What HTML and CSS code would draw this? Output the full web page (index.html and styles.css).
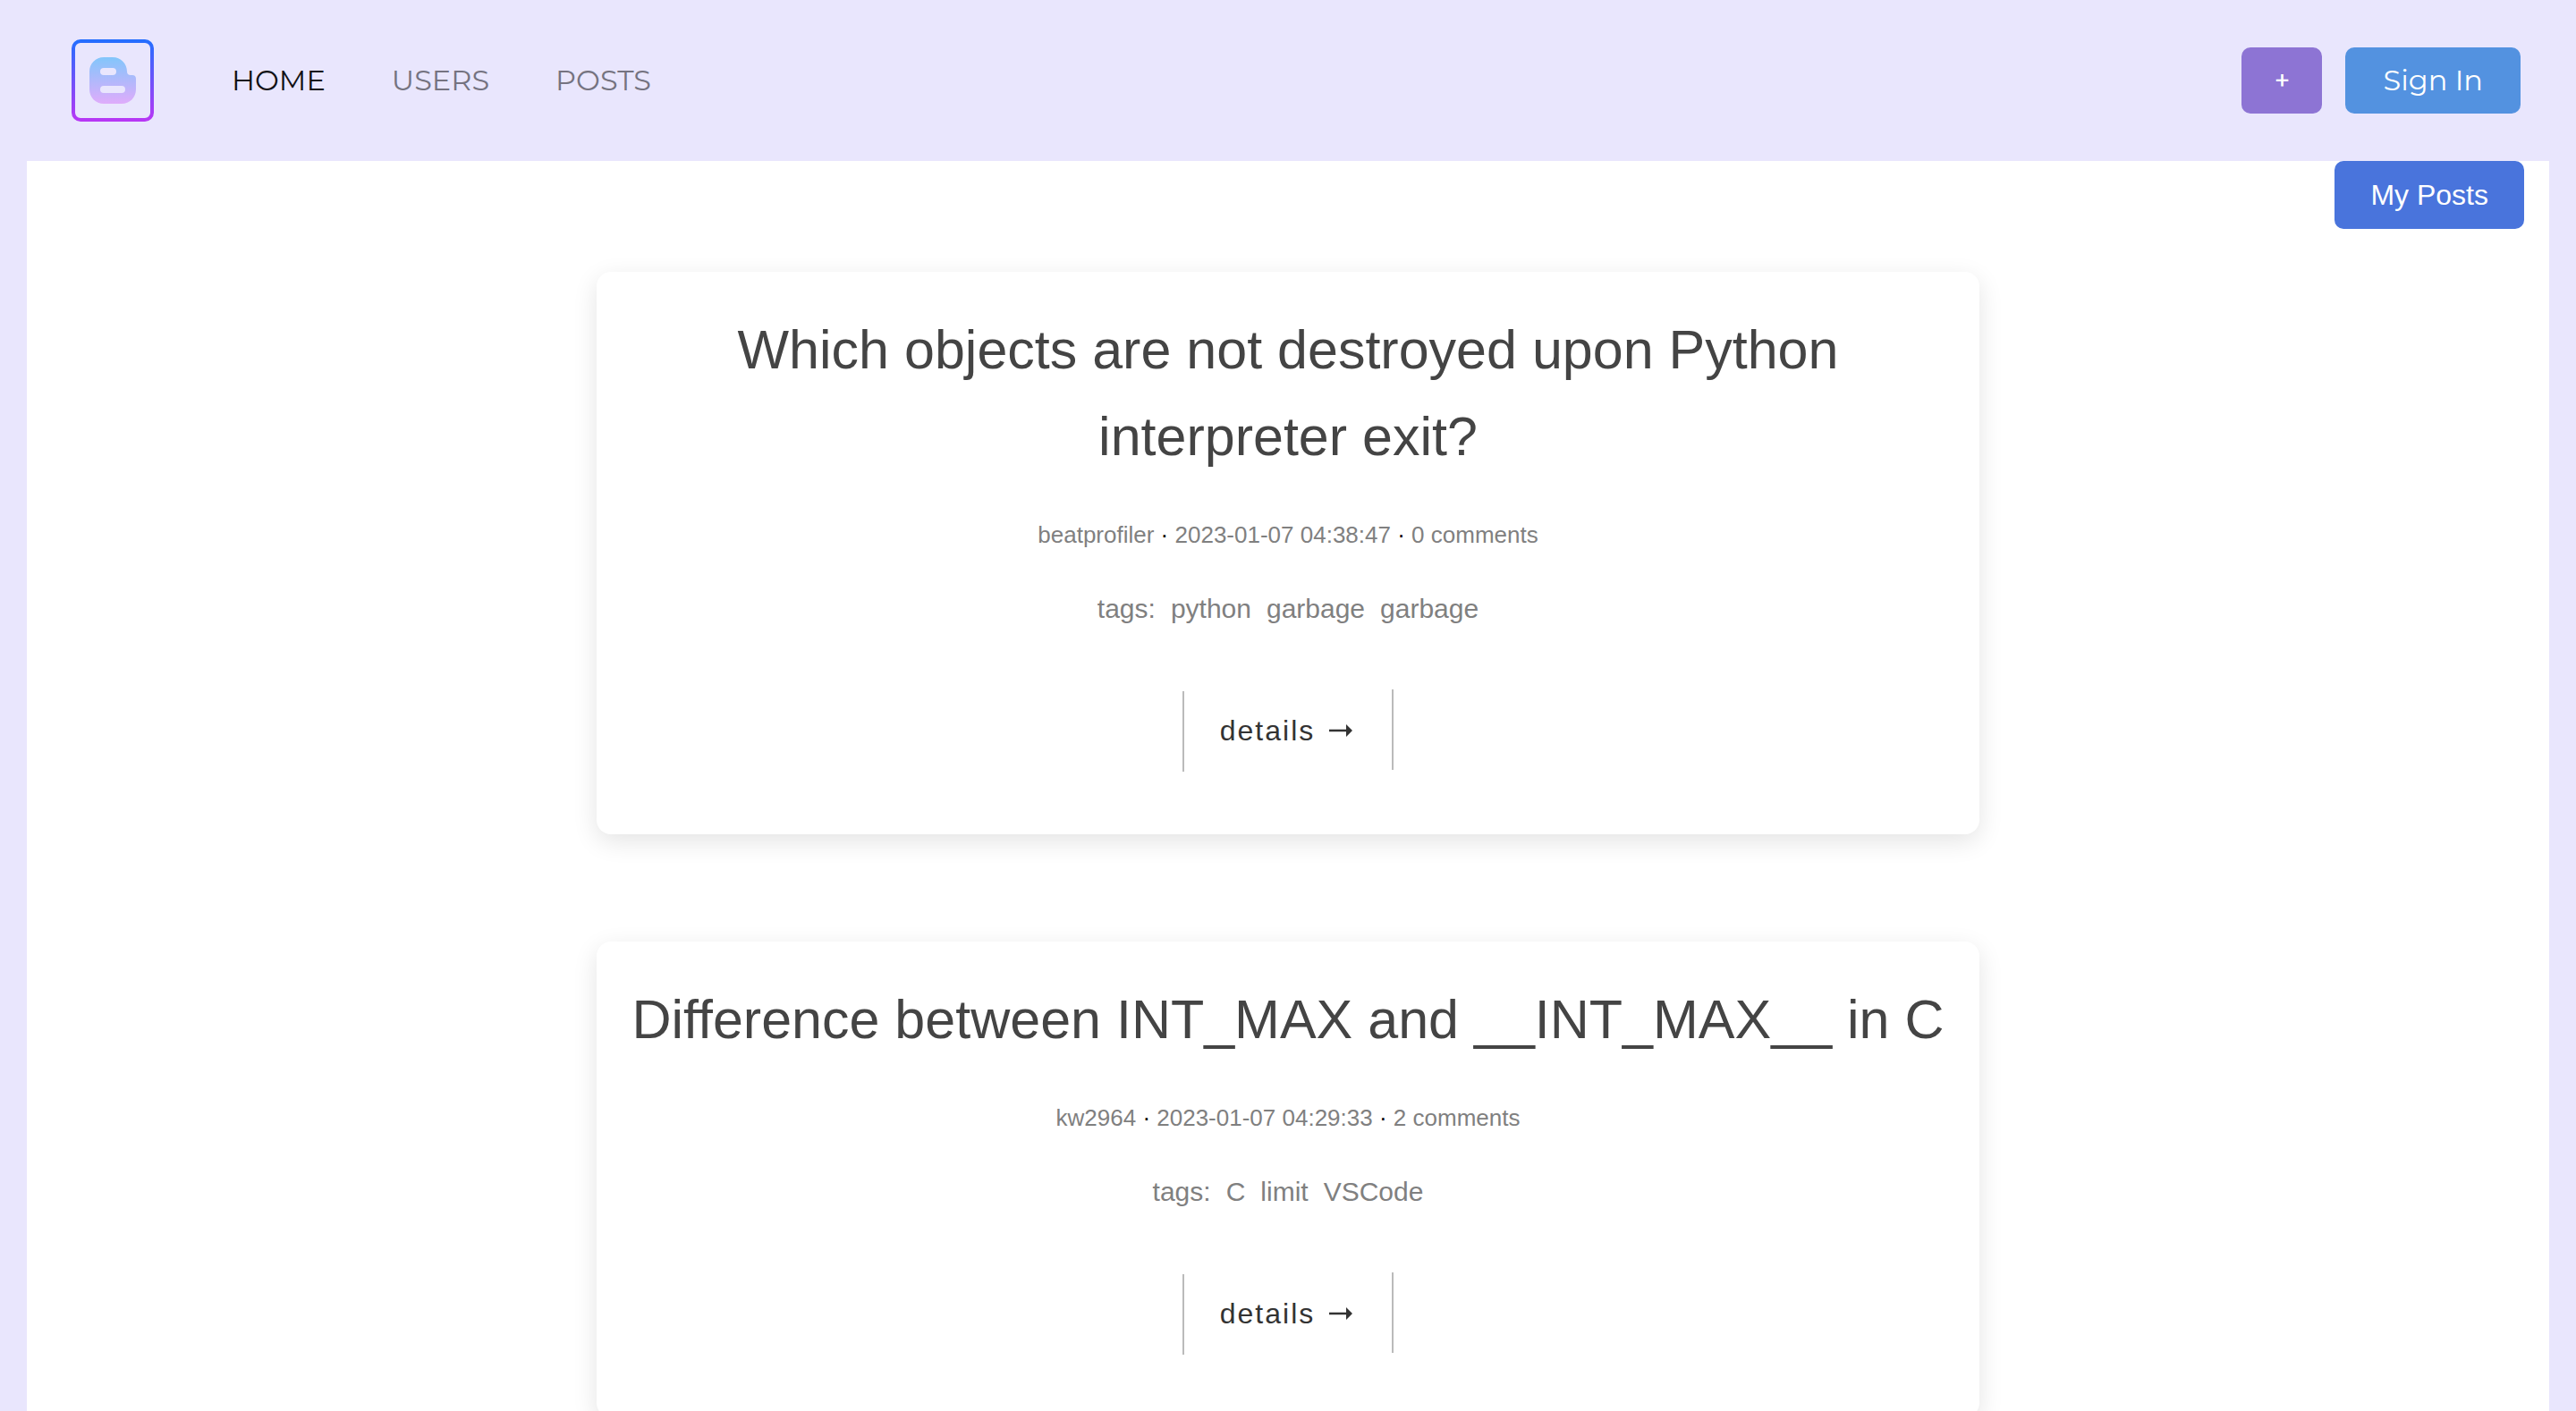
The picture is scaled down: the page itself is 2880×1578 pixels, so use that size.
FILE: index.html
```html
<!DOCTYPE html>
<html lang="en">
<head>
  <meta charset="utf-8">
  <meta name="viewport" content="width=device-width, initial-scale=1">
  <title>Posts</title>
  <link rel="stylesheet" href="styles.css">
</head>
<body>
  <header class="header">
    <a class="logo" href="#" aria-label="Blog home">
      <svg viewBox="0 0 92 92" width="92" height="92" aria-hidden="true">
        <defs>
          <linearGradient id="frame" x1="0" y1="0" x2="0" y2="92" gradientUnits="userSpaceOnUse">
            <stop offset="0" stop-color="#236fff"/>
            <stop offset="1" stop-color="#b936f5"/>
          </linearGradient>
          <linearGradient id="mark" x1="0" y1="0" x2="0" y2="1">
            <stop offset="0" stop-color="#82c6fb"/>
            <stop offset="1" stop-color="#dfacfb"/>
          </linearGradient>
        </defs>
        <rect x="2" y="2" width="88" height="88" rx="8" fill="none" stroke="url(#frame)" stroke-width="4"/>
        <path fill="url(#mark)" fill-rule="evenodd" d="M36 20H46C55 20 62 27 62 36C62 38.500 63.500 40 66 40H68C70.500 40 72 41.500 72 44V56C72 65 65 72 56 72H36C27 72 20 65 20 56V36C20 27 27 20 36 20ZM36 32A4 4 0 0 0 36 40H46A4 4 0 0 0 46 32ZM36 52A4 4 0 0 0 36 60H56A4 4 0 0 0 56 52Z"/>
      </svg>
    </a>
    <nav class="nav">
      <a class="nav-link active" href="#">HOME</a>
      <a class="nav-link" href="#">USERS</a>
      <a class="nav-link" href="#">POSTS</a>
    </nav>
    <div class="actions">
      <button class="button button-add" type="button" aria-label="New post">+</button>
      <button class="button button-sign" type="button">Sign In</button>
    </div>
  </header>

  <main class="main">
    <button class="button button-mine" type="button">My Posts</button>

    <div class="posts">
      <article class="card">
        <h2 class="title">Which objects are not destroyed upon Python interpreter exit?</h2>
        <p class="meta"><span>beatprofiler</span> <span class="dot">·</span> <time>2023-01-07 04:38:47</time> <span class="dot">·</span> <span>0 comments</span></p>
        <p class="tags"><span>tags:</span><span>python</span><span>garbage</span><span>garbage</span></p>
        <a class="details" href="#">
          <span class="details-label">details
            <svg class="arrow" viewBox="0 0 26 16" width="26" height="16" aria-hidden="true"><path d="M0 6.800H19V1L26 8L19 15V9.200H0Z"/></svg>
          </span>
        </a>
      </article>

      <article class="card">
        <h2 class="title">Difference between INT_MAX and __INT_MAX__ in C</h2>
        <p class="meta"><span>kw2964</span> <span class="dot">·</span> <time>2023-01-07 04:29:33</time> <span class="dot">·</span> <span>2 comments</span></p>
        <p class="tags"><span>tags:</span><span>C</span><span>limit</span><span>VSCode</span></p>
        <a class="details" href="#">
          <span class="details-label">details
            <svg class="arrow" viewBox="0 0 26 16" width="26" height="16" aria-hidden="true"><path d="M0 6.800H19V1L26 8L19 15V9.200H0Z"/></svg>
          </span>
        </a>
      </article>
    </div>
  </main>
</body>
</html>
```

FILE: styles.css
```css
* {
  box-sizing: border-box;
}

body {
  display: flex;
  flex-direction: column;
  height: 100vh;
  margin: 0;
  padding: 0 30px;
  overflow: hidden;
  background: #e9e6fd;
  font-family: "Liberation Sans", Arial, sans-serif;
}

a {
  color: inherit;
  text-decoration: none;
}

.header {
  display: flex;
  flex: none;
  align-items: center;
  padding: 44px 32px 44px 50px;
  font-family: Montserrat, Inter, sans-serif;
}

.logo,
.logo svg {
  display: block;
}

.nav {
  display: flex;
  gap: 74px;
  margin-left: 87px;
  font-size: 32px;
  line-height: 40px;
}

.nav-link {
  color: #757380;
}

.nav-link.active {
  color: #111114;
}

.actions {
  display: flex;
  gap: 26px;
  margin-left: auto;
}

.button {
  border: 0;
  border-radius: 10px;
  padding: 17px 40px;
  color: #fff;
  font-family: inherit;
  font-size: 32px;
  line-height: 40px;
}

.button-add {
  width: 90px;
  padding: 17px 0;
  background: #8d74d4;
  font-size: 30px;
  font-weight: 500;
}

.button-sign {
  padding: 17px 42px;
  background: #5392e0;
}

.button-mine {
  display: block;
  margin-left: auto;
  padding: 18px 40px;
  background: #4974dc;
}

.main {
  flex: 1;
  min-height: 0;
  padding: 0 28px;
  overflow-y: auto;
  scrollbar-width: none;
  background: #fff;
}

.posts {
  display: flex;
  flex-direction: column;
  align-items: center;
  gap: 120px;
  padding: 48px 0 120px;
}

.card {
  display: flex;
  flex-direction: column;
  align-items: center;
  width: 100%;
  max-width: 1546px;
  padding: 39px 30px 70px;
  border-radius: 16px;
  background: #fff;
  box-shadow: 0 8px 28px rgba(0, 0, 0, 0.11);
  text-align: center;
}

.title {
  margin: 0 0 40px;
  color: #444;
  font-size: 61px;
  font-weight: 400;
  line-height: 97px;
}

.meta {
  margin: 0 0 38px;
  color: #808080;
  font-size: 26px;
  line-height: 42px;
}

.dot {
  color: #000;
}

.tags {
  display: flex;
  gap: 17px;
  margin: 0 0 66px;
  color: #808080;
  font-size: 30px;
  line-height: 48px;
}

.details {
  display: flex;
  gap: 40px;
  height: 92px;
  color: #333;
  font-size: 32px;
  line-height: 92px;
  letter-spacing: 2px;
}

.details::before,
.details::after {
  width: 2px;
  height: 90px;
  background: #bbb;
  content: "";
}

.details::before {
  align-self: flex-end;
}

.details-label {
  display: flex;
  align-items: center;
  gap: 16px;
  padding-right: 4px;
}

.arrow {
  fill: #333;
}
```
